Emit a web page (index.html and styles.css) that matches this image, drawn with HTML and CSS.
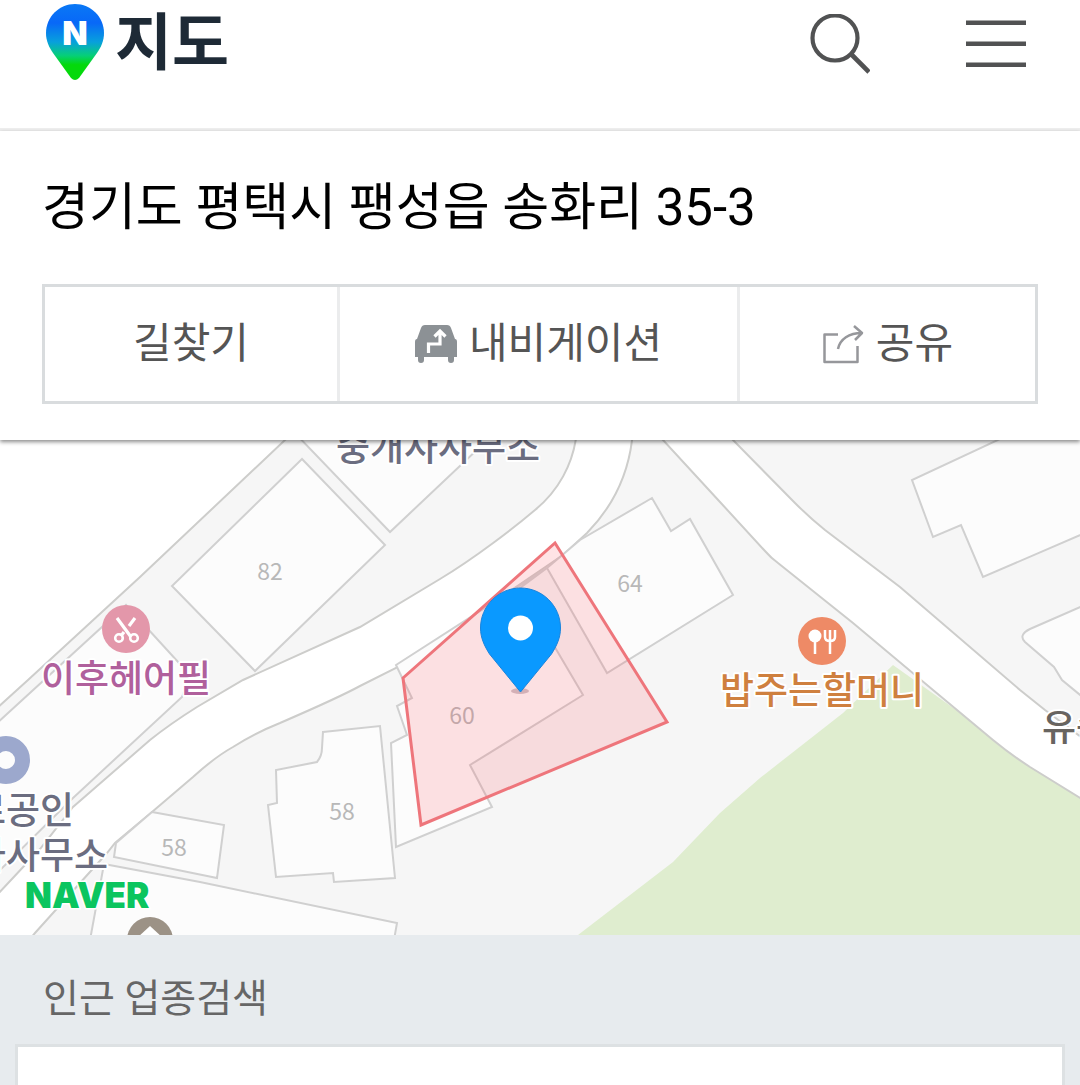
FILE: index.html
```
<!DOCTYPE html>
<html lang="ko">
<head>
    <meta charset="UTF-8">
    <meta name="viewport" content="width=device-width, initial-scale=1.0">
    <title>지도</title>
    <link rel="stylesheet" href="styles.css">
</head>
<body>
    <header class="header">
        <a class="logo" href="#">
            <svg class="logo-pin" viewBox="0 0 58 76" aria-hidden="true">
                <defs>
                    <linearGradient id="pinColor" x1="0" y1="0" x2="0" y2="1">
                        <stop offset="0" stop-color="#0a78f5"/>
                        <stop offset="0.25" stop-color="#0868f8"/>
                        <stop offset="0.5" stop-color="#08a0dc"/>
                        <stop offset="0.68" stop-color="#06cf78"/>
                        <stop offset="0.8" stop-color="#04d90c"/>
                        <stop offset="1" stop-color="#04d90c"/>
                    </linearGradient>
                </defs>
                <path fill="url(#pinColor)" d="M29 0C13 0 0 13 0 29c0 8 3 14 7 20l18 25q4 4 8 0l18-25c4-6 7-12 7-20C58 13 45 0 29 0z"/>
                <text class="logo-n" x="29" y="41" text-anchor="middle">N</text>
            </svg>
            <span>지도</span>
        </a>
        <div class="header-menu">
            <button class="icon-btn" aria-label="검색">
                <svg viewBox="0 0 60 60">
                    <g fill="none" stroke="#515253">
                        <circle cx="25" cy="24" r="22.5" stroke-width="4.2"/>
                        <path d="M41 40l18 18" stroke-width="4.6"/>
                    </g>
                </svg>
            </button>
            <button class="icon-btn" aria-label="메뉴">
                <svg viewBox="0 0 60 60">
                    <path d="M0 8.7h60M0 29.7h60M0 50.7h60" stroke="#515253" stroke-width="4.6"/>
                </svg>
            </button>
        </div>
    </header>

    <section class="place">
        <h1>경기도 평택시 팽성읍 송화리 35-3</h1>
        <div class="actions">
            <button class="btn">길찾기</button>
            <button class="btn">
                <svg class="icon-car" viewBox="0 0 42 40" aria-hidden="true">
                    <path fill="#8c9195" d="M10 1h22q3 0 4 3l4 11q2 0 2 3v15h-3v3a3 3 0 0 1-6 0v-3H9v3a3 3 0 0 1-6 0v-3H0V18q0-3 2-3L6 4q1-3 4-3z"/>
                    <path fill="none" stroke="#fff" stroke-width="3.200" d="M13.500 29v-9h11.500V8M19.500 12.500l5.500-5.500 5.500 5.500"/>
                </svg>
                내비게이션
            </button>
            <button class="btn">
                <svg class="icon-share" viewBox="0 0 42 40" aria-hidden="true">
                    <path fill="none" stroke="#96979b" stroke-width="2.500" stroke-linejoin="round" d="M16 10.500H2.500V38h33V22M16 25C18 15 27 9 40 9M32 2l8 7-7 7"/>
                </svg>
                공유
            </button>
        </div>
    </section>

    <main class="map">
        <svg viewBox="0 440 1080 495" role="img" aria-label="지도">
            <rect y="440" width="1080" height="495" fill="#f6f6f6"/>

            <!-- park -->
            <path fill="#dfedcf" d="M578 935L673 862L720 813L760 778L843 713L893 665L1080 798V935z"/>

            <!-- roads -->
            <g class="road">
                <path d="M-5 430H295L285 440L140 577L28 680L-5 710z"/>
                <path d="M577 430C574 465 557 492 535 510C515 527 475 558 440 579L360 627L243 680L197 707Q170 724 150 740L73 807L40 849L-5 897V945H25L35 933L53 913L107 853L115 843L152 812L193 777Q215 757 233 747Q255 733 280 723Q340 697 360 686L396 668L500 598L563 555L587 533Q629 490 633 430z"/>
                <path d="M653 430L663 440L720 502L765 551Q771 558 778 563L853 623L933 690L993 740Q1010 754 1030 767L1085 801V740L1045 710L1020 690L900 587L825 530Q810 518 795 503L733 440L723 430z"/>
            </g>

            <!-- buildings -->
            <g class="building">
                <path d="M302 459L172 586L255 671L385 545z"/>
                <path d="M292 430L390 532L498 430z"/>
                <path d="M-5 725L126 605L190 675L182 697L73 798L-5 875z"/>
                <path d="M152 812L224 825L217 878L114 857L116 843z"/>
                <path d="M323 732L380 726L395 878L334 882L333 873L276 877L268 805L277 803L276 770L317 762Q322 756 322 748z"/>
                <path d="M580 540L652 498L671 531L690 519L733 595L607 673L547 568z"/>
                <path d="M396 665L547 568L520 588L583 695L470 765L492 807L396 847L391 743L407 735L397 706L412 698z"/>
                <path d="M1030 425L912 480L933 537L961 525L983 577L1085 533V430z"/>
                <path d="M1085 605L1030 629Q1018 635 1025 642L1054 667L1062 680L1085 699z"/>
                <path d="M104 864L200 882L397 923L394 940H90z"/>
            </g>

            <g class="lot-number">
                <text x="270" y="580">82</text>
                <text x="630" y="592">64</text>
                <text x="462" y="724">60</text>
                <text x="342" y="820">58</text>
                <text x="174" y="856">58</text>
            </g>

            <!-- selected lot -->
            <path class="area" d="M555 543L667 722L421 825L403 678z"/>
            <ellipse cx="520" cy="691" rx="9" ry="3" fill="#b9909a" opacity="0.6"/>
            <path fill="#0a99ff" stroke="#1a84dc" d="M520.500 588c-22 0-40 18-40 40 0 10 4 18 9 26l31 38 31-38c5-8 9-16 9-26 0-22-18-40-40-40z"/>
            <circle cx="520.500" cy="628" r="12.500" fill="#fff"/>

            <!-- hair shop -->
            <circle cx="126" cy="629" r="24" fill="#e397aa"/>
            <g fill="none" stroke="#fff">
                <path d="M117 618l14 19M135 618l-6 8M124 632l-3 4" stroke-width="3.200"/>
                <circle cx="119" cy="638" r="3.800" stroke-width="2.600"/>
                <circle cx="134" cy="638" r="3.800" stroke-width="2.600"/>
            </g>
            <text class="label hair" x="126" y="692">이후헤어필</text>

            <!-- restaurant -->
            <circle cx="822" cy="641" r="24" fill="#ee8a66"/>
            <circle cx="815" cy="636" r="6.500" fill="#fff"/>
            <path fill="none" stroke="#fff" stroke-width="2.500" d="M815 640v14M830 640v14M825 630v7q0 4 5 4t5-4v-7M830 630v10"/>
            <text class="label food" x="822" y="704">밥주는할머니</text>

            <!-- agencies -->
            <text class="label office" x="438" y="461">중개사사무소</text>
            <circle cx="6" cy="760" r="16.500" fill="none" stroke="#9ca8cd" stroke-width="15"/>
            <text class="label office end" x="74" y="824">로공인</text>
            <text class="label office end" x="108" y="869">개사사무소</text>
            <text class="label dark" x="1042" y="741">유승</text>

            <circle cx="150" cy="940" r="23" fill="#9c9286"/>
            <path fill="#fff" d="M137 938l13-12 13 12z"/>

            <text class="naver" x="25" y="908">NAVER</text>
        </svg>
    </main>

    <section class="nearby">
        <h2>인근 업종검색</h2>
        <div class="nearby-list"></div>
    </section>
</body>
</html>
```

FILE: styles.css
```
* { box-sizing: border-box; }
body { margin: 0; min-height: 100vh; display: flex; flex-direction: column; background: #fff; color: #000; font-family: Roboto, "Noto Sans CJK KR", sans-serif; }
button { font-family: inherit; cursor: pointer; }

.header { display: flex; justify-content: space-between; align-items: flex-start; padding: 0 54px 40px 46px; border-bottom: 3px solid #eee; }
.logo { display: flex; align-items: flex-start; gap: 11px; height: 88px; color: #1e2a36; font-size: 62px; line-height: 88px; font-weight: 700; text-decoration: none; }
.logo-pin { width: 58px; height: 76px; margin-top: 4px; }
.logo-n { font: 900 33px Inter, sans-serif; fill: #fff; }
.header-menu { display: flex; align-items: center; gap: 96px; height: 88px; }
.icon-btn { width: 60px; height: 60px; padding: 0; border: none; background: none; }
.icon-btn svg { display: block; width: 60px; height: 60px; }

.place { position: relative; z-index: 1; padding: 41px 42px 36px; background: #fff; box-shadow: 0 2px 4px rgba(0, 0, 0, 0.45); }
.place h1 { margin: 0 0 40px; font-size: 51px; line-height: 72px; font-weight: 400; }
.actions { display: grid; grid-template-columns: 1fr 400px 1fr; height: 120px; border: 3px solid #d9dcde; }
.btn { display: flex; align-items: center; justify-content: center; gap: 12px; padding: 0; border: none; border-right: 3px solid #ebeced; background: #fff; color: #555; font-size: 42px; line-height: 60px; }
.btn:last-child { border-right: none; }
.icon-car, .icon-share { width: 42px; height: 40px; }

.map svg { display: block; width: 100%; height: auto; }
.road path { fill: #fff; stroke: #cdcdcb; stroke-width: 2; }
.building path { fill: #fcfcfc; stroke: #d0d0d0; stroke-width: 2; }
.lot-number text { font: 400 23px "Noto Sans CJK KR", sans-serif; fill: #b8b8b8; text-anchor: middle; }
.area { fill: rgba(255, 80, 95, 0.16); stroke: #ee757b; stroke-width: 3; }
.label { font: 500 37px "Noto Sans CJK KR", sans-serif; text-anchor: middle; stroke: #fff; stroke-width: 4px; stroke-linejoin: round; paint-order: stroke; }
.hair { fill: #b0609c; }
.food { fill: #cf803f; }
.office { fill: #6b6d80; }
.dark { fill: #686460; text-anchor: start; }
.end { text-anchor: end; }
.naver { font: 900 35px Inter, sans-serif; fill: #0bc55f; stroke: #fff; stroke-width: 3px; paint-order: stroke; }

.nearby { flex: 1; display: flex; flex-direction: column; padding: 34px 15px 0; background: #e7ebee; }
.nearby h2 { margin: 0 28px 15px; color: #666; font-size: 39px; line-height: 60px; font-weight: 400; }
.nearby-list { flex: 1; border: 3px solid #dde1e3; border-bottom: none; background: #fff; }
```
